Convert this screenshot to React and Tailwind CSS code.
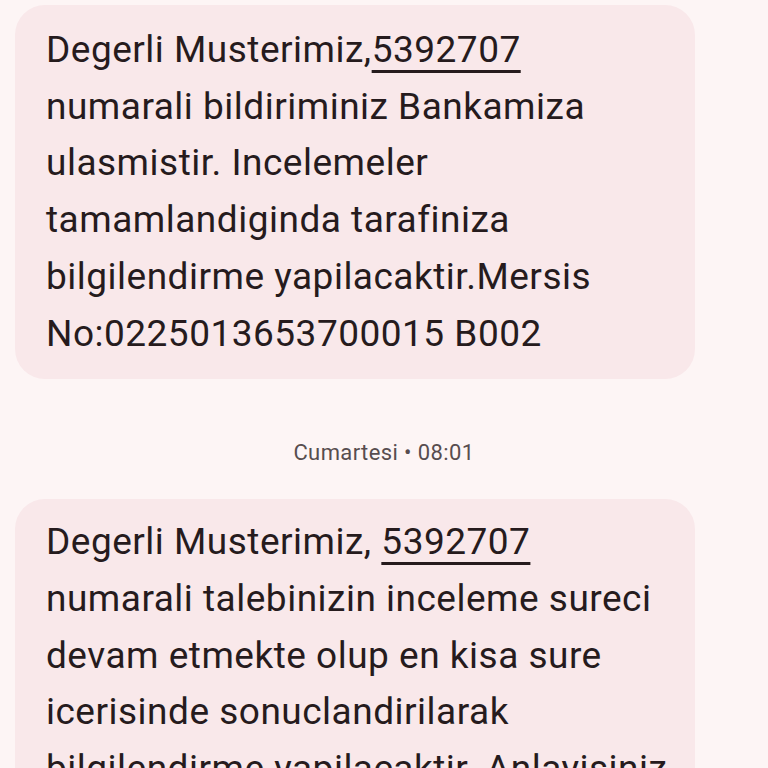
export default function App() {
  const font = { fontFamily: "Roboto, 'Noto Sans', sans-serif" };

  return (
    <div
      className="min-h-screen w-[768px] overflow-hidden bg-[#fdf5f5] text-[#261b1d]"
      style={font}
    >
      <div className="h-[768px] overflow-hidden">
        <div className="pt-[5px] pl-[15px]">
          <div className="w-[680px] rounded-[30px] bg-[#f9e8ea] pl-[31px] pr-[20px] pt-[17px] pb-[17px] text-[37px] leading-[56.7px] tracking-[0.5px]">
            Degerli Musterimiz,
            <span className="underline decoration-[3px] underline-offset-[8px]">5392707</span>
            <br />
            numarali bildiriminiz Bankamiza
            <br />
            ulasmistir. Incelemeler
            <br />
            tamamlandiginda tarafiniza
            <br />
            bilgilendirme yapilacaktir.Mersis
            <br />
            No:0225013653700015 B002
          </div>
        </div>

        <div className="flex justify-center pt-[61px] pb-[33px]">
          <span className="text-[22px] leading-[26px] tracking-[0.4px] text-[#574d4f]">
            Cumartesi • 08:01
          </span>
        </div>

        <div className="pl-[15px]">
          <div className="w-[680px] rounded-[30px] bg-[#f9e8ea] pl-[31px] pr-[20px] pt-[15px] pb-[17px] text-[37px] leading-[56.7px] tracking-[0.5px]">
            Degerli Musterimiz,{" "}
            <span className="underline decoration-[3px] underline-offset-[8px]">5392707</span>
            <br />
            numarali talebinizin inceleme sureci
            <br />
            devam etmekte olup en kisa sure
            <br />
            icerisinde sonuclandirilarak
            <br />
            bilgilendirme yapilacaktir. Anlayisiniz
            <br />
            icin tesekkur ederiz.
          </div>
        </div>
      </div>
    </div>
  );
}
